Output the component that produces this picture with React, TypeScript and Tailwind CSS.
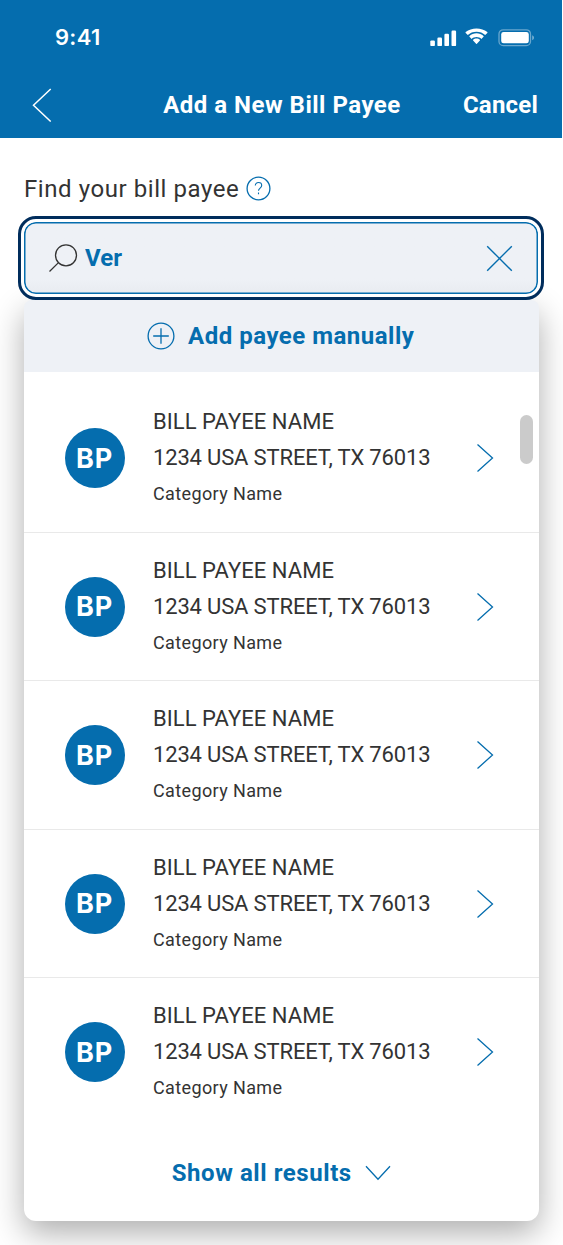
import React, { useState } from 'react';

interface Payee {
  id: number;
  initials: string;
  name: string;
  address: string;
  category: string;
}

const PAYEES: Payee[] = [1, 2, 3, 4, 5].map(id => ({
  id,
  initials: 'BP',
  name: 'BILL PAYEE NAME',
  address: '1234 USA STREET, TX 76013',
  category: 'Category Name',
}));

const StatusBar: React.FC = () => (
  <div className="flex h-[75px] items-center justify-between pl-[55px] pr-[27px]">
    <span className="-mt-px font-['Inter',sans-serif] text-[22px] font-semibold leading-[26px] tracking-[0.3px]">9:41</span>
    <svg width="106" height="20" viewBox="0 0 106 20" fill="currentColor">
      {/* signal */}
      <rect x="1.3" y="12.4" width="4.6" height="5.7" rx="1.2" />
      <rect x="8.4" y="9.5" width="4.6" height="8.6" rx="1.2" />
      <rect x="15.4" y="5.8" width="4.6" height="12.3" rx="1.2" />
      <rect x="22.5" y="2.5" width="4.6" height="15.6" rx="1.2" />
      {/* wifi */}
      <path d="M47.5 3.7c3.4 0 6.4 1.2 8.7 3.3l2.1-2.1c.3-.3.3-.6 0-.9C55.4 1.8 51.6.5 47.5.5s-7.9 1.3-10.8 3.5c-.3.3-.3.6 0 .9L38.8 7c2.3-2.1 5.3-3.300 8.700-3.300Z" />
      <path d="M47.5 9c1.9 0 3.6.7 4.9 1.900l2.100-2.100c.3-.3.3-.6 0-.9-1.900-1.700-4.300-2.700-7-2.700s-5.100 1-7 2.700c-.3.3-.3.6 0 .9l2.100 2.100C43.900 9.700 45.600 9 47.500 9Z" />
      <path d="M50.9 12.500c.3-.3.3-.6 0-.8-.9-.8-2.100-1.300-3.400-1.300s-2.500.5-3.400 1.300c-.3.2-.3.5 0 .8l3 3.300c.3.3.6.3.8 0l3-3.300Z" />
      {/* battery */}
      <rect x="70" y="1.8" width="31.5" height="15.8" rx="4.2" fill="none" stroke="currentColor" strokeOpacity="0.4" strokeWidth="1.3" />
      <rect x="72.2" y="4" width="27.6" height="11.3" rx="2.4" />
      <path d="M103.2 7.200c1.100.4 1.800 1.400 1.800 2.500s-.7 2.100-1.800 2.500v-5Z" fillOpacity="0.45" />
    </svg>
  </div>
);

const NavBar: React.FC = () => (
  <div className="grid h-[63px] grid-cols-[139px_1fr_137px] items-center pb-[3px]">
    <button aria-label="Back" className="pl-[32px]">
      <svg width="20" height="34" viewBox="0 0 20 34" fill="none" stroke="currentColor" strokeWidth="1.5">
        <path d="M18.7 1 1.5 17.3 18.7 33.5" />
      </svg>
    </button>
    <h1 className="whitespace-nowrap text-center text-[24px] font-bold leading-8 tracking-[0.5px]">Add a New Bill Payee</h1>
    <button className="pr-[24px] text-right text-[24px] font-bold leading-8 tracking-[0.2px]">Cancel</button>
  </div>
);

const PayeeRow: React.FC<{ payee: Payee }> = ({ payee }) => (
  <li className="flex h-[148.5px] items-center border-b border-[#e9e9e9] pl-[40.5px] pr-[45px] pt-px last:border-transparent">
    <div className="flex size-[60px] shrink-0 items-center justify-center rounded-full bg-[#056dae] font-['Inter',sans-serif] text-[27px] font-bold leading-none tracking-[0.8px] text-white">
      {payee.initials}
    </div>
    <div className="ml-[28.5px] flex-1 whitespace-nowrap text-[22px] leading-9 text-[#333]">
      <div className="tracking-[0.05px]">{payee.name}</div>
      <div className="tracking-[-0.16px]">{payee.address}</div>
      <div className="text-[18px] tracking-[0.38px]">{payee.category}</div>
    </div>
    <svg width="18" height="30" viewBox="0 0 18 30" fill="none" stroke="#056dae" strokeWidth="1.3">
      <path d="M1.5 1.5 16.5 15 1.5 28.5" />
    </svg>
  </li>
);

const App: React.FC = () => {
  const [query, setQuery] = useState('Ver');

  return (
    <div className="h-[1245px] w-[563px] overflow-hidden bg-white font-['Roboto',sans-serif]">
      <header className="h-[138px] w-[562px] bg-[#056dae] text-white">
        <StatusBar />
        <NavBar />
      </header>

      <main className="px-[24px] pt-[34px]">
        <label htmlFor="payee" className="flex h-[33px] items-center gap-[6.5px] text-[24px] leading-8 text-[#333]">
          <span className="tracking-[0.57px]">Find your bill payee</span>
          <svg width="25" height="25" viewBox="0 0 25 25" fill="none" stroke="#056dae" strokeWidth="1.3">
            <circle cx="12.5" cy="12.5" r="11.4" />
            <path d="M9.3 9.6c0-1.9 1.3-3.1 3.2-3.1s3.2 1.200 3.200 2.900c0 2.600-3.200 2.700-3.200 5.300M12.500 16.500v1.800" strokeWidth="1.1" />
          </svg>
        </label>

        {/* focused search field */}
        <div className="relative z-10 -ml-[6px] mt-[11px] h-[84px] w-[526px] rounded-[18px] border-[3px] border-[#002d5c] bg-white p-[3px]">
          <div className="flex h-full items-center rounded-[12px] bg-[#eef1f6] bg-linear-to-b from-[#eef1f6] from-80% to-[#e8ebf0] px-[25px] shadow-[inset_0_0_0_1.5px_#056dae]">
            <svg width="30" height="30" viewBox="0 0 30 30" fill="none" stroke="#333" strokeWidth="1.3" className="shrink-0">
              <circle cx="17" cy="12.3" r="10.5" />
              <path d="M9.5 19.6.5 28.5" />
            </svg>
            <input
              id="payee"
              value={query}
              onChange={e => setQuery(e.target.value)}
              className="ml-[6px] w-0 flex-1 bg-transparent text-[24px] font-bold leading-8 text-[#056dae] outline-none"
            />
            <button aria-label="Clear" onClick={() => setQuery('')}>
              <svg width="27" height="27" viewBox="0 0 27 27" fill="none" stroke="#056dae" strokeWidth="1.4">
                <path d="m1.2 1.2 24.600 24.600M25.800 1.200 1.200 25.800" />
              </svg>
            </button>
          </div>
        </div>

        {/* results */}
        <div className="h-[921px] w-[514.5px] rounded-[12px] bg-white shadow-[0_12px_32px_rgba(0,0,0,0.32)]">
          <button className="flex h-[72px] w-full items-center justify-center gap-[13px] rounded-t-[8px] bg-[#eef1f6] pr-px text-[24px] font-bold text-[#056dae]">
            <svg width="28" height="28" viewBox="0 0 28 28" fill="none" stroke="currentColor" strokeWidth="1.3">
              <circle cx="14" cy="14" r="12.9" />
              <path d="M14 6.2v15.6M6.2 14h15.6" />
            </svg>
            <span className="tracking-[0.5px]">Add payee manually</span>
          </button>

          <div className="relative pt-[12px]">
            <ul>
              {PAYEES.map(p => <PayeeRow key={p.id} payee={p} />)}
            </ul>
            <div className="absolute right-[6px] top-[43px] h-[49px] w-[12.5px] rounded-full bg-[#cbcbcb]" />
          </div>

          <button className="flex h-[93px] w-full items-center justify-center gap-[13px] text-[24px] font-bold text-[#056dae]">
            <span className="tracking-[0.56px]">Show all results</span>
            <svg width="26" height="16" viewBox="0 0 26 16" fill="none" stroke="currentColor" strokeWidth="1.3">
              <path d="M1 1.3 13 14.3 25 1.3" />
            </svg>
          </button>
        </div>
      </main>
    </div>
  );
};

export default App;
